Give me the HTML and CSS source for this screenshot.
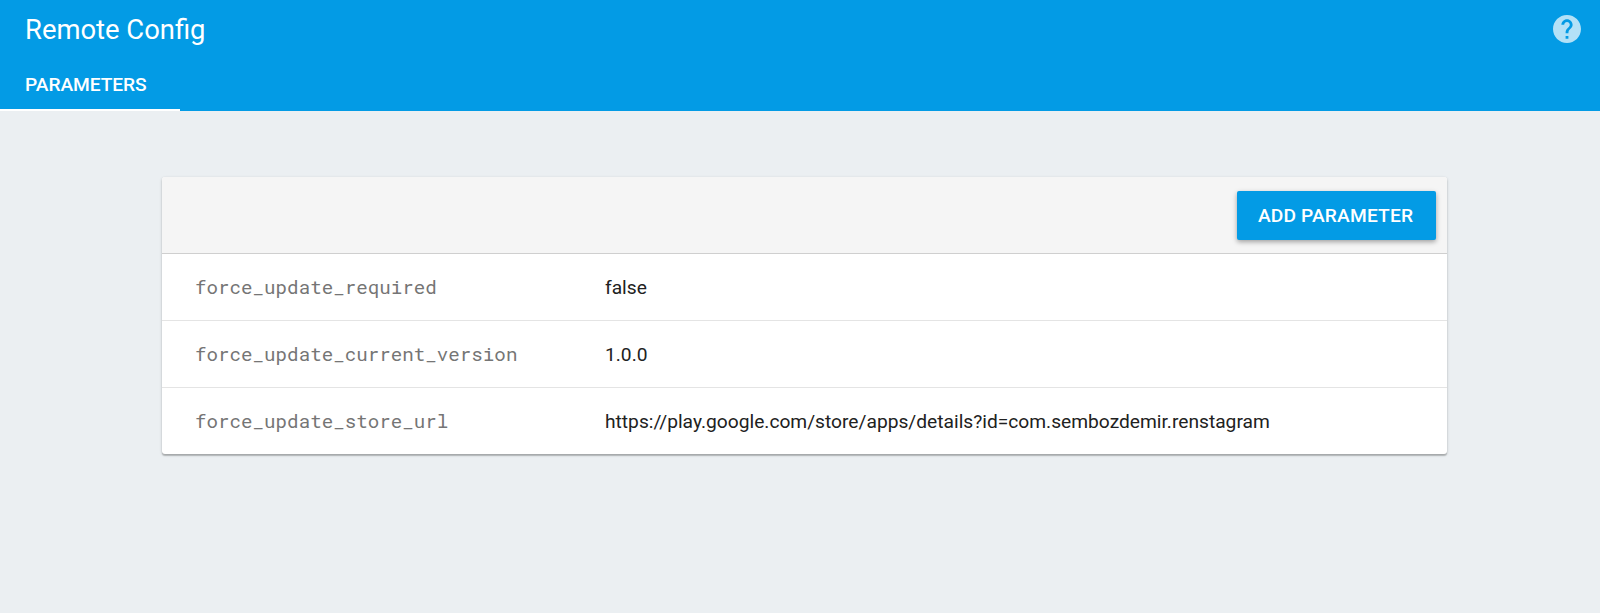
FILE: index.html
```html
<!DOCTYPE html>
<html lang="en">
<head>
<meta charset="utf-8">
<title>Remote Config</title>
<link rel="stylesheet" href="styles.css">
</head>
<body>
<header class="header">
  <div class="title-bar">
    <h1 class="title">Remote Config</h1>
    <svg class="help" viewBox="2 2 20 20" role="img" aria-label="Help"><path d="M12 2C6.48 2 2 6.48 2 12s4.48 10 10 10 10-4.480 10-10S17.520 2 12 2zm1 17h-2v-2h2v2zm2.070-7.750l-.9.920C13.450 12.900 13 13.500 13 15h-2v-.5c0-1.100.45-2.100 1.170-2.830l1.240-1.260c.37-.36.590-.86.590-1.410 0-1.100-.9-2-2-2s-2 .9-2 2H8c0-2.210 1.790-4 4-4s4 1.790 4 4c0 .88-.36 1.680-.93 2.250z"/></svg>
  </div>
  <nav class="tabs"><a class="tab"><span>PARAMETERS</span></a></nav>
</header>
<main class="card">
  <div class="toolbar"><button class="add">ADD PARAMETER</button></div>
  <div class="row"><span class="key">force_update_required</span><span class="value">false</span></div>
  <div class="row"><span class="key">force_update_current_version</span><span class="value">1.0.0</span></div>
  <div class="row"><span class="key">force_update_store_url</span><span class="value">https://play.google.com/store/apps/details?id=com.sembozdemir.renstagram</span></div>
</main>
</body>
</html>
```
FILE: styles.css
```css
* { box-sizing: border-box; }
body {
  margin: 0;
  min-height: 100vh;
  background: #ebeff2;
  font-family: Roboto, "Liberation Sans", sans-serif;
  font-size: 19.2px;
  color: #212121;
}
.header {
  height: 111px;
  background: #039be5;
  color: #fff;
  display: flex;
  flex-direction: column;
}
.title-bar {
  height: 58px;
  padding: 0 19px 0 25px;
  display: flex;
  align-items: center;
  justify-content: space-between;
}
.title {
  margin: 0;
  padding-top: 2px;
  font-size: 27.4px;
  font-weight: 400;
  line-height: 32px;
}
.help { width: 28px; height: 28px; fill: #b3e1f7; }
.tabs { display: flex; flex: 1; }
.tab {
  width: 180px;
  padding: 2px 0 0 25px;
  border-bottom: 2px solid #fff;
  display: flex;
  align-items: center;
  font-weight: 500;
  letter-spacing: -0.07px;
}
.card {
  width: 1284.5px;
  margin: 66px 0 0 162px;
  background: #fff;
  border-radius: 3px;
  box-shadow: 0 2px 1px rgba(0,0,0,.17), 0 1px 3px rgba(0,0,0,.22);
}
.toolbar {
  height: 77px;
  padding: 14px 11px 0 0;
  background: #f5f5f5;
  border-bottom: 1px solid #cfcfcf;
  border-radius: 3px 3px 0 0;
  display: flex;
  justify-content: flex-end;
  align-items: flex-start;
}
.add {
  width: 199px;
  height: 49px;
  padding: 0 1px 0 0;
  border: 0;
  border-radius: 2px;
  background: #039be5;
  color: #fff;
  font: 500 19.2px Roboto, "Liberation Sans", sans-serif;
  letter-spacing: 0.15px;
  box-shadow: 0 2px 5px rgba(0,0,0,.35);
}
.row {
  height: 67px;
  padding-left: 33px;
  display: flex;
  align-items: center;
  border-bottom: 1px solid #e4e4e4;
}
.row:last-child { height: 66px; border-bottom: 0; }
.key {
  width: 410px;
  padding-bottom: 2px;
  font-family: "Roboto Mono", "DejaVu Sans Mono", monospace;
  font-size: 19.2px;
  color: #757575;
}
```
